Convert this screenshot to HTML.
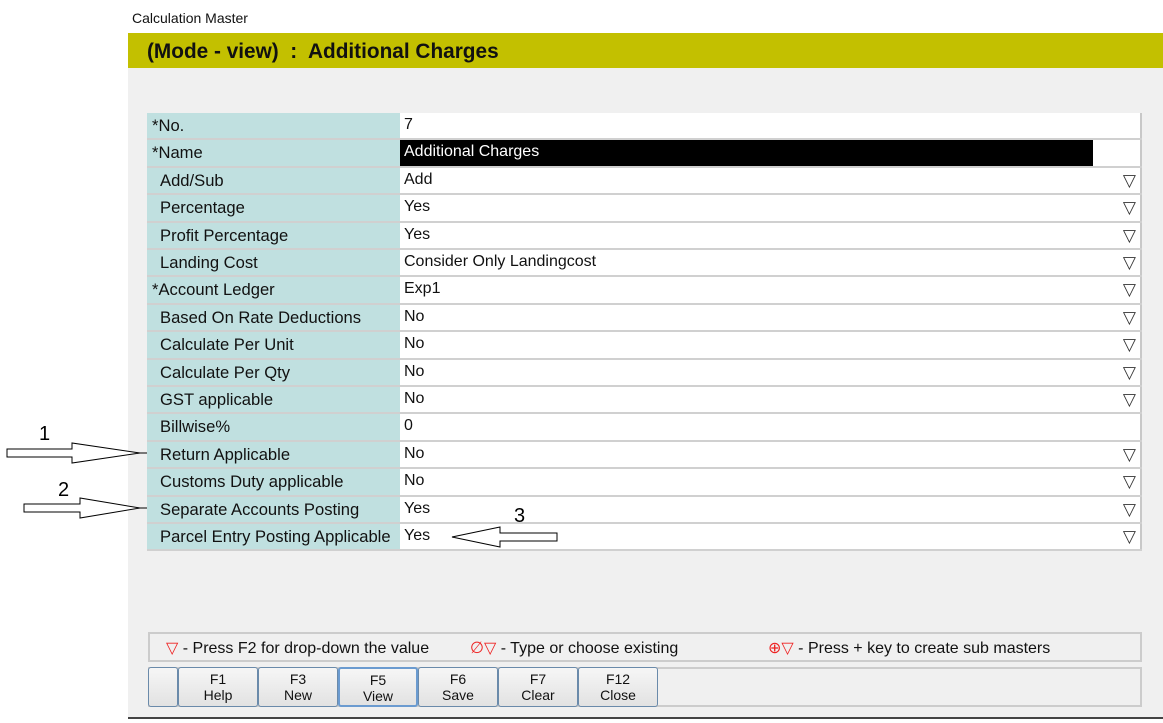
<!DOCTYPE html>
<html><head><style>
*{margin:0;padding:0;box-sizing:border-box}
body{width:1163px;height:723px;background:#fff;position:relative;overflow:hidden;font-family:"Liberation Sans",Arial,sans-serif;font-size:16px;color:#111}
.abs{position:absolute}
#title{left:132px;top:10px;font-size:14px}
#panel{left:128px;top:33px;width:1035px;height:686px;background:#f0f0f0;border-bottom:2px solid #444}
#hdr{left:128px;top:33px;width:1035px;height:35px;background:#c3c000;font-size:20.8px;font-weight:bold;padding:7px 0 0 19px;color:#111}
.row{position:absolute;left:147px;width:995px;height:27.4px;border-bottom:2px solid #d0d0d0}
.lab{position:absolute;left:0;top:0;width:253px;height:100%;background:#c0e0e0;padding:3px 0 0 13px;white-space:nowrap;font-size:16.6px}
.lab.s{padding-left:5px}
.val{position:absolute;left:253px;top:0;right:0;height:100%;background:#fff;padding:3px 0 0 4px;border-right:2px solid #c8c8c8}
.dd{position:absolute;right:4px;top:3px;font-size:17px;color:#333}
#legend{left:148px;top:632px;width:994px;height:30px;border:2px solid #ccc;background:#f0f0f0;font-size:16px}
.lg{position:absolute;top:4px;white-space:nowrap}
.r{color:#e22}
#btns{left:148px;top:667px;width:994px;height:40px;border:2px solid #ccc;background:#f0f0f0}
.b{position:absolute;top:667px;height:40px;border:1px solid #6a8aaa;border-radius:3px;background:linear-gradient(#f6f6f6,#e2e2e2);text-align:center;font-size:14px;line-height:16px;padding-top:3px}
</style></head><body>
<div class="abs" id="title">Calculation Master</div>
<div class="abs" id="panel"></div>
<div class="abs" id="hdr">(Mode - view)&nbsp; :&nbsp; Additional Charges</div>

<div class="row" style="top:113px"><div class="lab s">*No.</div><div class="val">7</div></div>
<div class="row" style="top:140.4px"><div class="lab s">*Name</div><div class="val"><div style="position:absolute;left:0;top:0;width:693px;height:26px;background:#000;color:#fff;padding:3px 0 0 4px">Additional Charges</div></div></div>
<div class="row" style="top:167.8px"><div class="lab">Add/Sub</div><div class="val">Add<span class="dd">▽</span></div></div>
<div class="row" style="top:195.2px"><div class="lab">Percentage</div><div class="val">Yes<span class="dd">▽</span></div></div>
<div class="row" style="top:222.6px"><div class="lab">Profit Percentage</div><div class="val">Yes<span class="dd">▽</span></div></div>
<div class="row" style="top:250px"><div class="lab">Landing Cost</div><div class="val">Consider Only Landingcost<span class="dd">▽</span></div></div>
<div class="row" style="top:277.4px"><div class="lab s">*Account Ledger</div><div class="val">Exp1<span class="dd">▽</span></div></div>
<div class="row" style="top:304.8px"><div class="lab">Based On Rate Deductions</div><div class="val">No<span class="dd">▽</span></div></div>
<div class="row" style="top:332.2px"><div class="lab">Calculate Per Unit</div><div class="val">No<span class="dd">▽</span></div></div>
<div class="row" style="top:359.6px"><div class="lab">Calculate Per Qty</div><div class="val">No<span class="dd">▽</span></div></div>
<div class="row" style="top:387px"><div class="lab">GST applicable</div><div class="val">No<span class="dd">▽</span></div></div>
<div class="row" style="top:414.4px"><div class="lab">Billwise%</div><div class="val">0</div></div>
<div class="row" style="top:441.8px"><div class="lab">Return Applicable</div><div class="val">No<span class="dd">▽</span></div></div>
<div class="row" style="top:469.2px"><div class="lab">Customs Duty applicable</div><div class="val">No<span class="dd">▽</span></div></div>
<div class="row" style="top:496.6px"><div class="lab">Separate Accounts Posting</div><div class="val">Yes<span class="dd">▽</span></div></div>
<div class="row" style="top:524px"><div class="lab">Parcel Entry Posting Applicable</div><div class="val">Yes<span class="dd">▽</span></div></div>

<div class="abs" id="legend">
<span class="lg" style="left:16px"><span class="r">▽</span> - Press F2 for drop-down the value</span>
<span class="lg" style="left:320px"><span class="r">∅▽</span> - Type or choose existing</span>
<span class="lg" style="left:618px"><span class="r">⊕▽</span> - Press + key to create sub masters</span>
</div>
<div class="abs" id="btns"></div>
<div class="b" style="left:148px;width:30px"></div>
<div class="b" style="left:178px;width:80px">F1<br>Help</div>
<div class="b" style="left:258px;width:80px">F3<br>New</div>
<div class="b" style="left:338px;width:80px;border:2px solid #6b9bd0">F5<br>View</div>
<div class="b" style="left:418px;width:80px">F6<br>Save</div>
<div class="b" style="left:498px;width:80px">F7<br>Clear</div>
<div class="b" style="left:578px;width:80px">F12<br>Close</div>

<svg class="abs" style="left:0;top:0" width="1163" height="723">
<g fill="#fff" stroke="#000" stroke-width="1">
<polygon points="7,449 72,449 72,443 140,453 72,463 72,457 7,457"/>
<line x1="140" y1="453" x2="147" y2="453"/>
<polygon points="24,504 80,504 80,498 140,508 80,518 80,512 24,512"/>
<line x1="140" y1="508" x2="147" y2="508"/>
<polygon points="557,533 500,533 500,527 452,537 500,547 500,541 557,541"/>
</g>
<g font-family="Liberation Sans,sans-serif" font-size="20" fill="#000">
<text x="39" y="440">1</text><text x="58" y="496">2</text><text x="514" y="522">3</text>
</g>
</svg>
</body></html>
